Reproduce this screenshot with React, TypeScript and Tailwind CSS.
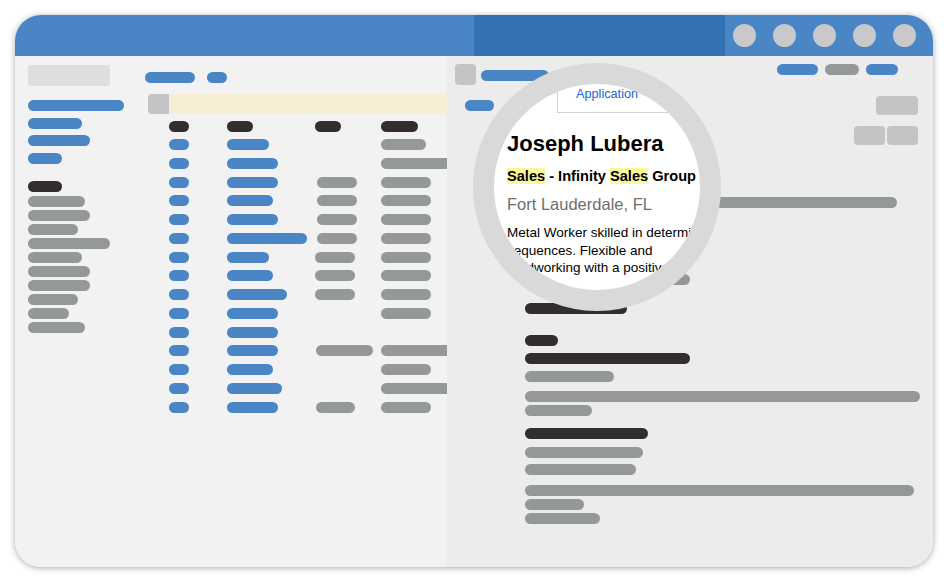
const COLORS: Record<string, string> = {
  b: 'bg-[#4a86c6]',
  g: 'bg-[#959899]',
  d: 'bg-[#332e2e]',
};

type Bar = [number, string, number];

// sidebar bars: width, colour, margin above
const sidebar: Bar[] = [
  [96, 'b', 14],
  [54, 'b', 7],
  [62, 'b', 6],
  [34, 'b', 7],
  [34, 'd', 17],
  [57, 'g', 4],
  [62, 'g', 3],
  [50, 'g', 3],
  [82, 'g', 3],
  [54, 'g', 3],
  [62, 'g', 3],
  [62, 'g', 3],
  [50, 'g', 3],
  [41, 'g', 3],
  [57, 'g', 3],
];

// table rows: name width, col3 [offset, width] or null, col4 width or 0
const rows: [number, [number, number] | null, number][] = [
  [42, null, 45],
  [51, null, 80],
  [51, [2, 40], 50],
  [46, [2, 40], 50],
  [51, [2, 40], 50],
  [80, [2, 40], 50],
  [42, [0, 40], 50],
  [46, [0, 40], 50],
  [60, [0, 40], 50],
  [51, null, 50],
  [51, null, 0],
  [51, [1, 57], 80],
  [46, null, 50],
  [55, null, 80],
  [51, [1, 39], 50],
];

// right pane detail bars
const detail: Bar[] = [
  [372, 'g', 52],
  [165, 'g', 66],
  [102, 'd', 18],
  [33, 'd', 21],
  [165, 'd', 7],
  [89, 'g', 7],
  [395, 'g', 9],
  [67, 'g', 3],
  [123, 'd', 12],
  [118, 'g', 8],
  [111, 'g', 6],
  [389, 'g', 10],
  [59, 'g', 3],
  [75, 'g', 3],
];

function Pill({ w, c, mt = 0 }: { w: number; c: string; mt?: number }) {
  return (
    <div
      className={`h-[11px] shrink-0 rounded-full ${COLORS[c]}`}
      style={{ width: w, marginTop: mt }}
    />
  );
}

function Magnifier() {
  return (
    <div className="absolute left-[458px] top-[48px] h-[248px] w-[248px] overflow-hidden rounded-full border-[21px] border-[#d9d9d9] bg-white font-['Liberation_Sans',Arial,sans-serif]">
      <div className="ml-[63px] h-[29px] w-[120px] border-x border-b border-[#d2d2d2] pl-[18px] pt-[3px] text-[12.7px] leading-[15px] text-[#2563d4]">
        Application
      </div>
      <div className="ml-[13px] whitespace-nowrap">
        <div className="mt-[18px] text-[22px] font-bold leading-[26px] text-black">Joseph Lubera</div>
        <div className="mt-[9px] text-[14.6px] font-bold leading-[20px] text-black">
          <span className="bg-[#fbf89c]">Sales</span> - Infinity <span className="bg-[#fbf89c]">Sales</span> Group
        </div>
        <div className="mt-[7px] text-[16.5px] leading-[22px] text-[#6e6e6e]">Fort Lauderdale, FL</div>
        <div className="mt-[9px] text-[13.5px] leading-[17.5px] text-black">
          <div>Metal Worker skilled in determining</div>
          <div>sequences. Flexible and</div>
          <div>hardworking with a positive attitude</div>
        </div>
      </div>
    </div>
  );
}

export default function App() {
  return (
    <div className="min-h-[583px] w-[948px] bg-white p-[15px]">
      <div className="relative flex h-[552px] w-[918px] flex-col overflow-hidden rounded-[26px] shadow-[0_1px_6px_rgba(0,0,0,0.35)]">
        {/* title bar */}
        <div className="flex h-[41px] shrink-0">
          <div className="w-[459px] bg-[#4a86c6]" />
          <div className="w-[251px] bg-[#3373b3]" />
          <div className="flex flex-1 items-center gap-[17px] bg-[#4a86c6] pl-[8px]">
            {[0, 1, 2, 3, 4].map((i) => (
              <div key={i} className="h-[23px] w-[23px] rounded-full bg-[#c9c9c9]" />
            ))}
          </div>
        </div>

        <div className="flex flex-1">
          {/* left pane */}
          <div className="flex w-[432px] bg-[#f2f2f2]">
            <div className="w-[130px] shrink-0 pl-[13px]">
              <div className="mt-[9px] h-[21px] w-[82px] rounded-[3px] bg-[#dedede]" />
              {sidebar.map(([w, c, mt], i) => (
                <Pill key={i} w={w} c={c} mt={mt} />
              ))}
            </div>

            <div className="flex-1 overflow-hidden pt-[16px]">
              <div className="flex gap-[12px]">
                <Pill w={50} c="b" />
                <Pill w={20} c="b" />
              </div>
              <div className="ml-[3px] mt-[11px] flex h-[20px]">
                <div className="w-[21px] rounded-l-[4px] bg-[#c4c4c4]" />
                <div className="flex-1 bg-[#f8eed6]" />
              </div>

              <div className="ml-[24px] mt-[7px]">
                <div className="flex h-[18px]">
                  <div className="w-[58px] shrink-0"><Pill w={20} c="d" /></div>
                  <div className="w-[88px] shrink-0"><Pill w={26} c="d" /></div>
                  <div className="w-[66px] shrink-0"><Pill w={26} c="d" /></div>
                  <div className="shrink-0"><Pill w={37} c="d" /></div>
                </div>
                {rows.map(([name, c3, c4], i) => (
                  <div key={i} className="flex h-[18.75px]">
                    <div className="w-[58px] shrink-0"><Pill w={20} c="b" /></div>
                    <div className="w-[88px] shrink-0"><Pill w={name} c="b" /></div>
                    <div className="w-[66px] shrink-0">
                      {c3 && (
                        <div style={{ marginLeft: c3[0] }}>
                          <Pill w={c3[1]} c="g" />
                        </div>
                      )}
                    </div>
                    <div className="shrink-0">{c4 > 0 && <Pill w={c4} c="g" />}</div>
                  </div>
                ))}
              </div>
            </div>
          </div>

          {/* right pane */}
          <div className="flex-1 bg-[#ececec]">
            <div className="mt-[8px] flex justify-between pr-[35px]">
              <div className="flex gap-[5px] pl-[8px]">
                <div className="h-[21px] w-[21px] rounded-[4px] bg-[#c4c4c4]" />
                <div className="mt-[6px]"><Pill w={68} c="b" /></div>
              </div>
              <div className="flex gap-[7px]">
                <Pill w={41} c="b" />
                <Pill w={34} c="g" />
                <Pill w={32} c="b" />
              </div>
            </div>
            <div className="mt-[11px] flex items-center justify-between pl-[18px] pr-[15px]">
              <Pill w={29} c="b" />
              <div className="h-[19px] w-[42px] rounded-[4px] bg-[#c4c4c4]" />
            </div>
            <div className="mt-[11px] flex justify-end gap-[2px] pr-[15px]">
              <div className="h-[19px] w-[31px] rounded-[4px] bg-[#c4c4c4]" />
              <div className="h-[19px] w-[31px] rounded-[4px] bg-[#c4c4c4]" />
            </div>
            <div className="pl-[78px]">
              {detail.map(([w, c, mt], i) => (
                <Pill key={i} w={w} c={c} mt={mt} />
              ))}
            </div>
          </div>
        </div>

        <Magnifier />
      </div>
    </div>
  );
}
